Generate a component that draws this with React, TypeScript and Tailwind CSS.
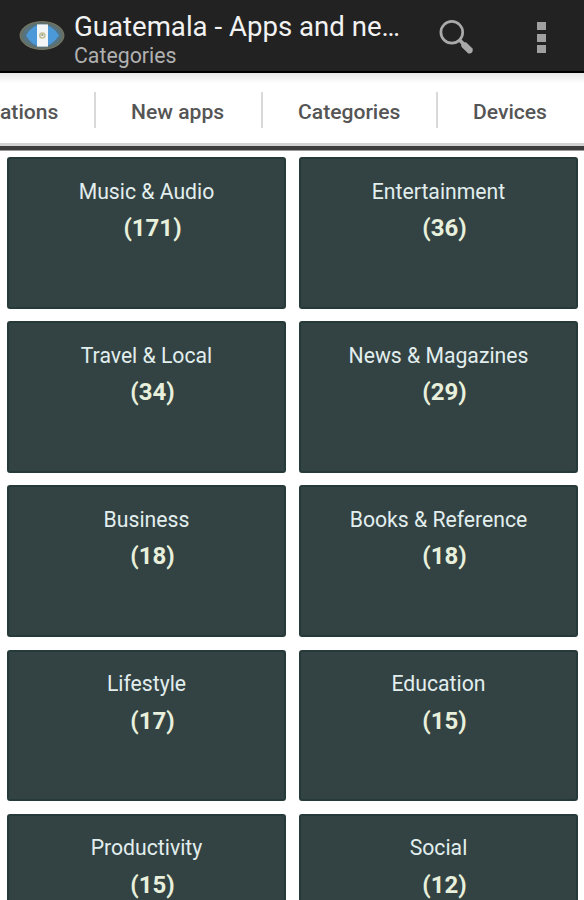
import { clsx } from "clsx";

interface Category {
  name: string;
  count: number;
}

const tabs = [
  { label: "ations", width: "w-[94px]", text: "w-[57px]" },
  { label: "New apps", width: "w-[167px]", text: "w-[94px]" },
  { label: "Categories", width: "w-[175px]", text: "w-[102px]" },
  { label: "Devices", width: "w-[148px]", text: "w-[74px]" },
];

const categories: Category[] = [
  { name: "Music & Audio", count: 171 },
  { name: "Entertainment", count: 36 },
  { name: "Travel & Local", count: 34 },
  { name: "News & Magazines", count: 29 },
  { name: "Business", count: 18 },
  { name: "Books & Reference", count: 18 },
  { name: "Lifestyle", count: 17 },
  { name: "Education", count: 15 },
  { name: "Productivity", count: 15 },
  { name: "Social", count: 12 },
];

function FlagIcon() {
  return (
    <svg width="46" height="30" viewBox="0 0 46 30" className="shrink-0">
      <ellipse cx="23" cy="14.5" rx="22" ry="14" fill="#637068" stroke="#817f68" strokeWidth="0.8" />
      <ellipse cx="23" cy="14.5" rx="19" ry="12" fill="#547484" />
      <path d="M7 14.5Q13 3.5 23 3.5T40 14.5Q33 25.5 23 25.5T7 14.5Z" fill="#4b99d9" />
      <rect x="18" y="3.4" width="11" height="22.2" fill="#f3f6f6" />
      <circle cx="23.3" cy="14.5" r="2.5" fill="none" stroke="#c4bf98" strokeWidth="1.6" />
      <circle cx="23.3" cy="14" r="1.1" fill="#8ca07f" />
    </svg>
  );
}

function SearchIcon() {
  return (
    <svg width="38" height="38" viewBox="0 0 38 38" className="shrink-0" fill="none" stroke="#a9a9a9">
      <circle cx="13.8" cy="14.3" r="10.9" strokeWidth="2.7" />
      <path d="M21.5 22L25.5 26" strokeWidth="3.8" />
      <path d="M25.6 26.4L32.8 33.4" strokeWidth="6.4" />
      <path d="M26 27L31.9 32.6" strokeWidth="5.4" strokeLinecap="round" />
    </svg>
  );
}

function Header() {
  return (
    <header className="flex h-[73px] items-start border-b-2 border-black bg-[#222222]">
      <div className="pt-[21px] pl-[19px]">
        <FlagIcon />
      </div>
      <div className="ml-[9px] w-[340px] pt-[10px] whitespace-nowrap">
        <h1 className="text-[27.6px] leading-[33px] text-[#f2f2f2]">Guatemala - Apps and ne…</h1>
        <p className="text-[21.3px] leading-[25px] text-[#b0b0b0]">Categories</p>
      </div>
      <button type="button" aria-label="Search" className="mt-[18px] ml-[24px]">
        <SearchIcon />
      </button>
      <button type="button" aria-label="More options" className="mt-[22px] ml-[61px] flex flex-col gap-[3.5px]">
        <span className="h-2 w-[9px] bg-[#a0a0a0]" />
        <span className="h-2 w-[9px] bg-[#a0a0a0]" />
        <span className="h-2 w-[9px] bg-[#a0a0a0]" />
      </button>
    </header>
  );
}

function TabStrip() {
  return (
    <nav className="flex h-[70px] items-center bg-linear-to-b from-[#e8e8e8] via-white via-15% to-white pt-[4px]">
      {tabs.map((tab, i) => (
        <div
          key={tab.label}
          className={clsx(
            "flex h-[36px] items-center pt-[3px] text-[21.1px] font-medium whitespace-nowrap text-[#555555]",
            tab.width,
            i === 0 ? "pl-0" : "border-l-2 border-[#d9d9d9] pl-[35px]",
          )}
        >
          <span className={tab.text}>{tab.label}</span>
        </div>
      ))}
    </nav>
  );
}

function CategoryCard({ name, count }: Category) {
  return (
    <div className="h-[151.5px] rounded-[3px] border-2 border-[#263b39] bg-[#334343] pt-[18.5px] text-center">
      <div className="text-[21.2px] leading-[28px] text-[#e2eeee]">{name}</div>
      <div className="mt-[8.5px] pl-[12px] text-[24px] leading-[28px] font-bold text-[#e8f0dc]">({count})</div>
    </div>
  );
}

export default function App() {
  return (
    <div className="h-[900px] w-[584px] overflow-hidden bg-white font-['Roboto',sans-serif]">
      <Header />
      <TabStrip />
      <div className="h-[8px] border-t-3 border-b border-t-[#d2d2d2] border-b-[#999999] bg-[#3d3d3d]" />
      <main className="grid grid-cols-2 gap-x-[13px] gap-y-[12.7px] pt-[6px] pr-[6px] pl-[7px]">
        {categories.map((category) => (
          <CategoryCard key={category.name} {...category} />
        ))}
      </main>
    </div>
  );
}
